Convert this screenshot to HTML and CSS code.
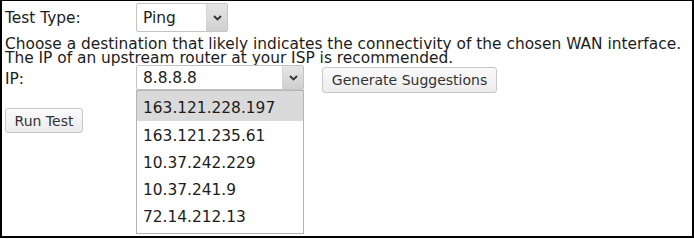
FILE: index.html
```html
<!DOCTYPE html>
<html lang="en">
<head>
  <meta charset="UTF-8" />
  <title>Diagnostics</title>
  <link rel="stylesheet" href="styles.css">
</head>
<body>
  <div class="frame">
    <div class="row type-row">
      <span class="label">Test Type:</span>
      <div class="select ping">
        <span class="value">Ping</span>
        <span class="arrow"><svg width="9" height="6" viewBox="0 0 9 6"><path d="M1 1 L4.5 4.5 L8 1" fill="none" stroke="#333" stroke-width="1.8"/></svg></span>
      </div>
    </div>

    <p class="help">Choose a destination that likely indicates the connectivity of the chosen WAN interface.<br>The IP of an upstream router at your ISP is recommended.</p>

    <div class="row ip-row">
      <span class="label">IP:</span>
      <div class="select ip">
        <span class="value">8.8.8.8</span>
        <span class="arrow"><svg width="9" height="6" viewBox="0 0 9 6"><path d="M1 1 L4.5 4.5 L8 1" fill="none" stroke="#333" stroke-width="1.8"/></svg></span>
        <ul class="options">
          <li class="active">163.121.228.197</li>
          <li>163.121.235.61</li>
          <li>10.37.242.229</li>
          <li>10.37.241.9</li>
          <li>72.14.212.13</li>
        </ul>
      </div>
      <button class="btn gen">Generate Suggestions</button>
    </div>

    <div class="run">
      <button class="btn">Run Test</button>
    </div>
  </div>
</body>
</html>
```

FILE: styles.css
```css
html, body {
  margin: 0;
  padding: 0;
  background: #fff;
}

body {
  font-family: 'DejaVu Sans', sans-serif;
  font-size: 15.4px;
  color: #1c1c1c;
}

.frame {
  width: 689px;
  height: 235px;
  border: 2px solid #000;
  border-top-width: 1px;
  padding-left: 1px;
  position: relative;
}

.row {
  display: flex;
}

.label {
  width: 133px;
  padding-left: 2px;
  box-sizing: border-box;
}

.type-row {
  margin-top: 2px;
  height: 29px;
  align-items: center;
}

.select {
  position: relative;
  display: flex;
  align-items: stretch;
  border: 1px solid #c4c4c4;
  border-radius: 2px;
  background: #fff;
  box-sizing: border-box;
}

.select .value {
  flex: 1;
  padding-left: 6px;
  display: flex;
  align-items: center;
}

.select .arrow {
  width: 20px;
  display: flex;
  align-items: center;
  justify-content: center;
  background: linear-gradient(#e6e6e6, #cfcfcf);
  border-left: 1px solid #d4d4d4;
}

.ping {
  width: 92px;
  height: 29px;
}

.help {
  margin: 5px 0 0 2px;
  line-height: 14px;
}

.ip-row {
  align-items: flex-start;
}

.ip-row .label {
  line-height: 29px;
}

.ip {
  width: 168px;
  height: 25px;
}

.options {
  position: absolute;
  top: 24px;
  left: -1px;
  width: 168px;
  margin: 0;
  padding: 0 0 4px;
  list-style: none;
  background: #fff;
  border: 1px solid #b4b4b4;
  box-sizing: border-box;
}

.options li {
  height: 24px;
  line-height: 24px;
  padding: 3px 0 0 6px;
}

.options li.active {
  background: #dadada;
  height: 25px;
  line-height: 25px;
  padding-top: 5px;
}

.btn {
  font-family: 'DejaVu Sans', sans-serif;
  font-size: 14px;
  color: #333;
  background: linear-gradient(#fafafa, #ececec);
  border: 1px solid #c8c8c8;
  border-radius: 3px;
  padding: 0;
  height: 26px;
}

.gen {
  margin: 2px 0 0 18px;
  width: 175px;
}

.run {
  margin-top: 14px;
  padding-left: 2px;
}

.run .btn {
  width: 78px;
  height: 25px;
}
```
